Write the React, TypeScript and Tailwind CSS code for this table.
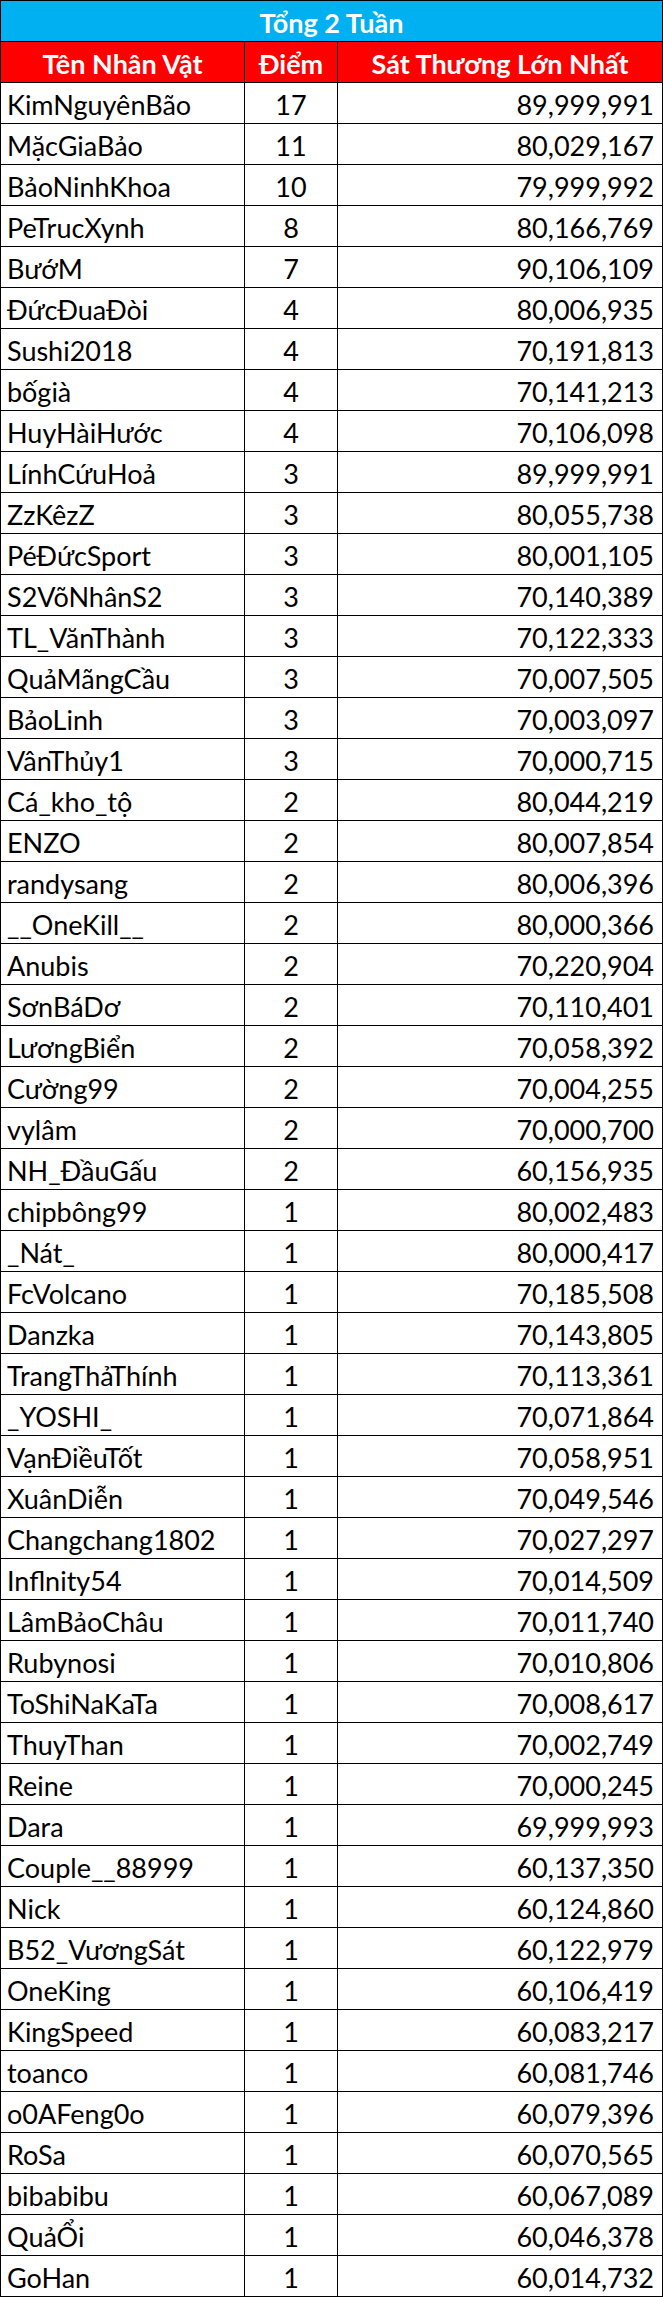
// Bảng xếp hạng "Tổng 2 Tuần"
type Row = { name: string; score: number; damage: string };

const rows: Row[] = [
  { name: "KimNguyênBão", score: 17, damage: "89,999,991" },
  { name: "MặcGiaBảo", score: 11, damage: "80,029,167" },
  { name: "BảoNinhKhoa", score: 10, damage: "79,999,992" },
  { name: "PeTrucXynh", score: 8, damage: "80,166,769" },
  { name: "BướM", score: 7, damage: "90,106,109" },
  { name: "ĐứcĐuaĐòi", score: 4, damage: "80,006,935" },
  { name: "Sushi2018", score: 4, damage: "70,191,813" },
  { name: "bốgià", score: 4, damage: "70,141,213" },
  { name: "HuyHàiHước", score: 4, damage: "70,106,098" },
  { name: "LínhCứuHoả", score: 3, damage: "89,999,991" },
  { name: "ZzKêzZ", score: 3, damage: "80,055,738" },
  { name: "PéĐứcSport", score: 3, damage: "80,001,105" },
  { name: "S2VõNhânS2", score: 3, damage: "70,140,389" },
  { name: "TL_VănThành", score: 3, damage: "70,122,333" },
  { name: "QuảMãngCầu", score: 3, damage: "70,007,505" },
  { name: "BảoLinh", score: 3, damage: "70,003,097" },
  { name: "VânThủy1", score: 3, damage: "70,000,715" },
  { name: "Cá_kho_tộ", score: 2, damage: "80,044,219" },
  { name: "ENZO", score: 2, damage: "80,007,854" },
  { name: "randysang", score: 2, damage: "80,006,396" },
  { name: "__OneKill__", score: 2, damage: "80,000,366" },
  { name: "Anubis", score: 2, damage: "70,220,904" },
  { name: "SơnBáDơ", score: 2, damage: "70,110,401" },
  { name: "LươngBiển", score: 2, damage: "70,058,392" },
  { name: "Cường99", score: 2, damage: "70,004,255" },
  { name: "vylâm", score: 2, damage: "70,000,700" },
  { name: "NH_ĐầuGấu", score: 2, damage: "60,156,935" },
  { name: "chipbông99", score: 1, damage: "80,002,483" },
  { name: "_Nát_", score: 1, damage: "80,000,417" },
  { name: "FcVolcano", score: 1, damage: "70,185,508" },
  { name: "Danzka", score: 1, damage: "70,143,805" },
  { name: "TrangThảThính", score: 1, damage: "70,113,361" },
  { name: "_YOSHI_", score: 1, damage: "70,071,864" },
  { name: "VạnĐiềuTốt", score: 1, damage: "70,058,951" },
  { name: "XuânDiễn", score: 1, damage: "70,049,546" },
  { name: "Changchang1802", score: 1, damage: "70,027,297" },
  { name: "Inflnity54", score: 1, damage: "70,014,509" },
  { name: "LâmBảoChâu", score: 1, damage: "70,011,740" },
  { name: "Rubynosi", score: 1, damage: "70,010,806" },
  { name: "ToShiNaKaTa", score: 1, damage: "70,008,617" },
  { name: "ThuyThan", score: 1, damage: "70,002,749" },
  { name: "Reine", score: 1, damage: "70,000,245" },
  { name: "Dara", score: 1, damage: "69,999,993" },
  { name: "Couple__88999", score: 1, damage: "60,137,350" },
  { name: "Nick", score: 1, damage: "60,124,860" },
  { name: "B52_VươngSát", score: 1, damage: "60,122,979" },
  { name: "OneKing", score: 1, damage: "60,106,419" },
  { name: "KingSpeed", score: 1, damage: "60,083,217" },
  { name: "toanco", score: 1, damage: "60,081,746" },
  { name: "o0AFeng0o", score: 1, damage: "60,079,396" },
  { name: "RoSa", score: 1, damage: "60,070,565" },
  { name: "bibabibu", score: 1, damage: "60,067,089" },
  { name: "QuảỔi", score: 1, damage: "60,046,378" },
  { name: "GoHan", score: 1, damage: "60,014,732" },
];

const cell = "h-[41px] border-r border-b border-black flex items-center pt-[2px]";

export default function App() {
  return (
    <div className="w-[663px] bg-white font-['Lato','Noto_Sans',sans-serif] text-[27px] leading-none text-black">
      <div className="grid grid-cols-[244px_93px_325px] border-l border-t border-black">
        {/* tiêu đề */}
        <div className={`${cell} col-span-3 justify-center bg-[#00B0F0] font-bold text-white`}>
          Tổng 2 Tuần
        </div>

        {/* hàng tiêu đề cột */}
        <div className={`${cell} justify-center bg-[#FF0000] font-bold text-white`}>Tên Nhân Vật</div>
        <div className={`${cell} justify-center bg-[#FF0000] font-bold text-white`}>Điểm</div>
        <div className={`${cell} justify-center bg-[#FF0000] font-bold text-white`}>Sát Thương Lớn Nhất</div>

        {rows.map((r) => (
          <div key={r.name} className="contents">
            <div className={`${cell} pl-[6px] whitespace-nowrap`}>{r.name}</div>
            <div className={`${cell} justify-center`}>{r.score}</div>
            <div className={`${cell} justify-end pr-[8px]`}>{r.damage}</div>
          </div>
        ))}
      </div>
    </div>
  );
}
